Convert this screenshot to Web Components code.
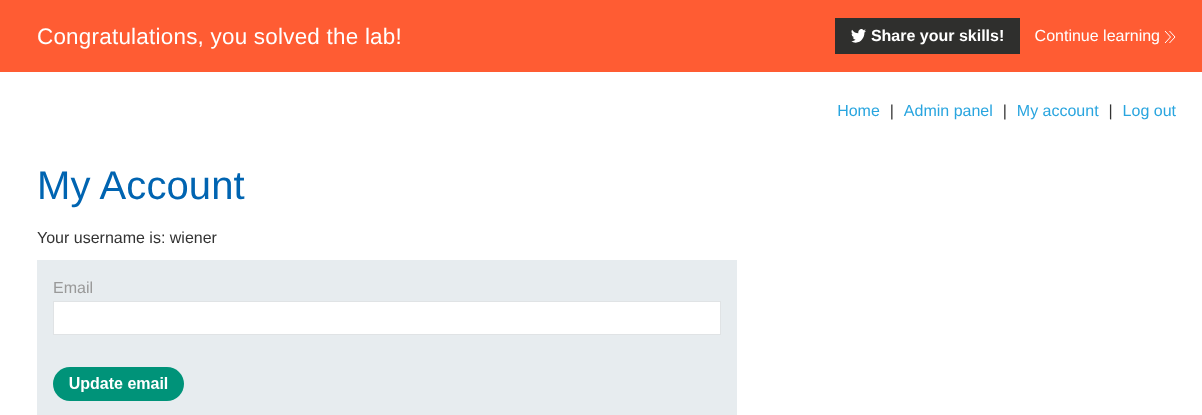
<!DOCTYPE html>
<html>
<head>
<meta charset="utf-8">
<title>My Account</title>
<style>
  html { margin: 0; padding: 0; background: #fff; height: 415px; overflow: hidden; }
  body { margin: 0; padding: 0; font-family: "Liberation Sans", Arial, sans-serif; font-size: 16px; color: #333; will-change: opacity; text-rendering: geometricPrecision; }
</style>
</head>
<body>
<lab-banner>
  Congratulations, you solved the lab!
  <share-button slot="share">Share your skills!</share-button>
  <a slot="next" href="#">Continue learning</a>
</lab-banner>
<page-main>
  <top-nav slot="nav">
    <a href="#">Home</a>
    <a href="#">Admin panel</a>
    <a href="#">My account</a>
    <a href="#">Log out</a>
  </top-nav>
  <h1 slot="title">My Account</h1>
  <p slot="intro">Your username is: wiener</p>
  <email-form slot="form" label="Email" action="Update email"></email-form>
</page-main>
<script>
class LabBanner extends HTMLElement {
  constructor() {
    super();
    this.attachShadow({ mode: "open" }).innerHTML = `
      <style>
        :host { display: flex; align-items: center; height: 72px; padding: 0 26px 0 37px; background: #ff5c33; color: #fff; box-sizing: border-box; }
        #msg { flex: 1; padding-top: 2px; font-size: 22.4px; letter-spacing: 0.25px; }
        #next { display: flex; align-items: center; margin-left: 15px; padding-top: 2px; font-size: 16px; }
        ::slotted(a) { color: #fff; text-decoration: none; }
        svg { margin-left: 4px; margin-top: -1px; }
      </style>
      <div id="msg"><slot></slot></div>
      <slot name="share"></slot>
      <div id="next"><slot name="next"></slot>
        <svg width="12" height="14" viewBox="0 0 12 14" fill="none" stroke="#fff" stroke-width="1">
          <path d="M1 1l5.500 6L1 13M5.500 1L11 7l-5.500 6"/>
        </svg>
      </div>`;
  }
}

class ShareButton extends HTMLElement {
  constructor() {
    super();
    this.attachShadow({ mode: "open" }).innerHTML = `
      <style>
        :host { display: flex; align-items: center; justify-content: center; gap: 5px; width: 185px; height: 36px; box-sizing: border-box; padding-top: 2px; background: #2f2f2d; color: #fff; font-weight: bold; font-size: 16px; }
        svg { margin-left: 1px; margin-top: -2px; }
      </style>
      <svg width="15" height="14" viewBox="0 0 24 20" preserveAspectRatio="none" fill="#fff">
        <path d="M24 2.400a9.800 9.800 0 0 1-2.800.8A5 5 0 0 0 23.300.5a9.800 9.800 0 0 1-3.100 1.200A4.900 4.900 0 0 0 11.800 6.200 14 14 0 0 1 1.700.9a4.900 4.900 0 0 0 1.500 6.600 4.900 4.900 0 0 1-2.200-.6v.1a4.900 4.900 0 0 0 3.900 4.800 4.900 4.900 0 0 1-2.200.1 4.900 4.900 0 0 0 4.600 3.400A9.900 9.900 0 0 1 0 17.300 14 14 0 0 0 7.500 19.500c9.100 0 14-7.500 14-14v-.6A10 10 0 0 0 24 2.400z"/>
      </svg>
      <slot></slot>`;
  }
}

class TopNav extends HTMLElement {
  constructor() {
    super();
    this.attachShadow({ mode: "open" }).innerHTML = `
      <style>
        :host { display: flex; justify-content: flex-end; font-size: 16px; line-height: 20px; }
        #links { display: flex; }
        ::slotted(a) { color: #29a5df; text-decoration: none; }
        ::slotted(a:not(:first-child)) { margin-left: 24px; position: relative; }
        ::slotted(a:not(:first-child))::before { content: "|"; position: absolute; left: -14px; color: #333; }
      </style>
      <div id="links"><slot></slot></div>`;
  }
}

class PageMain extends HTMLElement {
  constructor() {
    super();
    this.attachShadow({ mode: "open" }).innerHTML = `
      <style>
        :host { display: block; padding: 30px 26px 0 37px; }
        ::slotted(h1) { margin: 41px 0 0; font-size: 40px; font-weight: normal; line-height: 46px; color: #0064b1; letter-spacing: 0.1px; }
        ::slotted(p) { margin: 21px 0 12px; font-size: 16px; line-height: 18px; color: #333; }
      </style>
      <slot name="nav"></slot>
      <slot name="title"></slot>
      <slot name="intro"></slot>
      <slot name="form"></slot>`;
  }
}

class EmailForm extends HTMLElement {
  constructor() {
    super();
    this.attachShadow({ mode: "open" }).innerHTML = `
      <style>
        :host { display: block; width: 700px; box-sizing: border-box; padding: 20px 16px 14px; background: #e7ecef; }
        label { display: block; color: #999; font-size: 16px; line-height: 18px; margin-bottom: 3px; }
        input { display: block; width: 100%; height: 34px; box-sizing: border-box; border: 1px solid #e0e3e5; background: #fff; padding: 0 8px; margin: 0 0 32px; font: inherit; outline: none; }
        button { display: block; width: 131px; height: 34px; padding: 0; border: none; border-radius: 17px; background: #009379; color: #fff; font: bold 16px "Liberation Sans", Arial, sans-serif; }
      </style>
      <label id="l"></label>
      <input type="email" aria-labelledby="l">
      <button type="button"></button>`;
  }
  connectedCallback() {
    this.shadowRoot.querySelector("label").textContent = this.getAttribute("label");
    this.shadowRoot.querySelector("button").textContent = this.getAttribute("action");
  }
}

customElements.define("lab-banner", LabBanner);
customElements.define("share-button", ShareButton);
customElements.define("top-nav", TopNav);
customElements.define("page-main", PageMain);
customElements.define("email-form", EmailForm);
</script>
</body>
</html>
